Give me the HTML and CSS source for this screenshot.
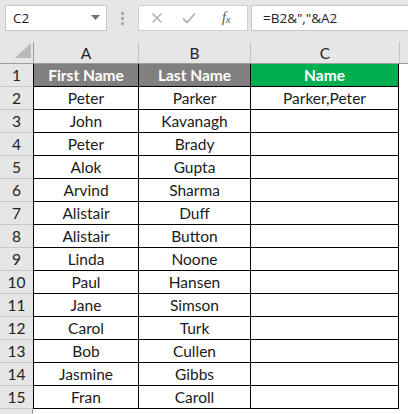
FILE: index.html
```html
<!DOCTYPE html>
<html>
<head>
<meta charset="utf-8">
<link rel="stylesheet" href="styles.css">
</head>
<body>
<div class="app">
  <div class="toolbar">
    <div class="namebox">
      <span class="nb-text">C2</span>
      <svg class="nb-arrow" width="9" height="5" viewBox="0 0 9 5"><polygon points="0,0 9,0 4.5,5" fill="#6f6f6f"/></svg>
    </div>
    <div class="dots"><i></i><i></i><i></i></div>
    <div class="fbtns">
      <svg width="12" height="12" viewBox="0 0 12 12" class="x-ic"><path d="M1.5 1.5 L10.5 10.5 M10.5 1.5 L1.5 10.5" stroke="#a9a9a9" stroke-width="1.3"/></svg>
      <svg width="14" height="12" viewBox="0 0 14 12" class="ok-ic"><path d="M1 6.5 L5 10.5 L13 1.5" stroke="#a9a9a9" stroke-width="1.6" fill="none"/></svg>
      <span class="fx">f<sub>x</sub></span>
    </div>
    <div class="finput">=B2&amp;","&amp;A2</div>
  </div>
  <div class="sheet">
    <div class="hrow">
      <div class="corner"><svg width="17" height="16" viewBox="0 0 17 16" class="tri"><polygon points="16,0 16,15 0,15" fill="#b8b8b8"/></svg></div>
      <div class="ch cha">A</div>
      <div class="ch">B</div>
      <div class="ch">C</div>
      <div class="ch chr"></div>
    </div>
    <div class="row"><div class="rn">1</div><div class="cell hd">First Name</div><div class="cell hd">Last Name</div><div class="cell c hdg">Name</div><div class="rest"></div></div>
    <div class="row"><div class="rn">2</div><div class="cell">Peter</div><div class="cell">Parker</div><div class="cell c">Parker,Peter</div><div class="rest"></div></div>
    <div class="row"><div class="rn">3</div><div class="cell">John</div><div class="cell">Kavanagh</div><div class="cell c"></div><div class="rest"></div></div>
    <div class="row"><div class="rn">4</div><div class="cell">Peter</div><div class="cell">Brady</div><div class="cell c"></div><div class="rest"></div></div>
    <div class="row"><div class="rn">5</div><div class="cell">Alok</div><div class="cell">Gupta</div><div class="cell c"></div><div class="rest"></div></div>
    <div class="row"><div class="rn">6</div><div class="cell">Arvind</div><div class="cell">Sharma</div><div class="cell c"></div><div class="rest"></div></div>
    <div class="row"><div class="rn">7</div><div class="cell">Alistair</div><div class="cell">Duff</div><div class="cell c"></div><div class="rest"></div></div>
    <div class="row"><div class="rn">8</div><div class="cell">Alistair</div><div class="cell">Button</div><div class="cell c"></div><div class="rest"></div></div>
    <div class="row"><div class="rn">9</div><div class="cell">Linda</div><div class="cell">Noone</div><div class="cell c"></div><div class="rest"></div></div>
    <div class="row"><div class="rn">10</div><div class="cell">Paul</div><div class="cell">Hansen</div><div class="cell c"></div><div class="rest"></div></div>
    <div class="row"><div class="rn">11</div><div class="cell">Jane</div><div class="cell">Simson</div><div class="cell c"></div><div class="rest"></div></div>
    <div class="row"><div class="rn">12</div><div class="cell">Carol</div><div class="cell">Turk</div><div class="cell c"></div><div class="rest"></div></div>
    <div class="row"><div class="rn">13</div><div class="cell">Bob</div><div class="cell">Cullen</div><div class="cell c"></div><div class="rest"></div></div>
    <div class="row"><div class="rn">14</div><div class="cell">Jasmine</div><div class="cell">Gibbs</div><div class="cell c"></div><div class="rest"></div></div>
    <div class="row"><div class="rn">15</div><div class="cell">Fran</div><div class="cell">Caroll</div><div class="cell c"></div><div class="rest"></div></div>
    <div class="row"><div class="rn rn-empty"></div><div class="blank"></div></div>
  </div>
</div>
</body>
</html>
```
FILE: styles.css
```css
html, body {
  margin: 0;
  padding: 0;
  background: #ffffff;
  overflow: hidden;
}
.app {
  width: 408px;
  height: 414px;
  overflow: hidden;
  font-family: Lato, "Open Sans", sans-serif;
  color: #1a1a1a;
}
.toolbar {
  height: 42px;
  background: #e6e6e6;
  display: flex;
  align-items: flex-start;
  padding-top: 5px;
  box-sizing: border-box;
}
.namebox {
  margin-left: 5px;
  width: 102px;
  height: 26px;
  box-sizing: border-box;
  background: #fff;
  border: 1px solid #c6c6c6;
  display: flex;
  align-items: center;
  justify-content: space-between;
  padding: 0 6px 0 7px;
  font-family: "Open Sans", "Noto Sans", sans-serif;
  font-size: 13.5px;
  color: #222;
}
.nb-arrow {
  margin-top: -2px;
}
.dots {
  width: 31px;
  height: 26px;
  display: flex;
  flex-direction: column;
  align-items: center;
  justify-content: center;
  gap: 2px;
}
.dots i {
  display: block;
  width: 3px;
  height: 3px;
  background: #ababab;
}
.fbtns {
  width: 110px;
  height: 26px;
  box-sizing: border-box;
  background: #fff;
  border: 1px solid #d0d0d0;
  display: flex;
  align-items: center;
  padding-left: 12px;
}
.ok-ic {
  margin-left: 19px;
}
.fx {
  margin-left: 26px;
  font-family: "Liberation Serif", serif;
  font-style: italic;
  font-size: 14px;
  color: #555;
  line-height: 1;
}
.fx sub {
  font-size: 10px;
  vertical-align: -1px;
}
.finput {
  margin-left: 3px;
  flex: 1;
  height: 26px;
  box-sizing: border-box;
  background: #fff;
  border: 1px solid #c6c6c6;
  border-right: none;
  display: flex;
  align-items: center;
  padding-left: 11px;
  font-family: "Open Sans", "Noto Sans", sans-serif;
  font-size: 13.5px;
  color: #222;
}
.hrow, .row {
  display: grid;
  grid-template-columns: 33px 105px 112px 149px 1fr;
}
.hrow {
  height: 22px;
  background: #e6e6e6;
  border-bottom: 1px solid #9c9c9c;
  box-sizing: border-box;
}
.corner {
  position: relative;
}
.tri {
  position: absolute;
  left: 15px;
  top: 1px;
}
.ch {
  border-left: 1px solid #c2c2c2;
  display: flex;
  align-items: center;
  justify-content: center;
  font-size: 15.5px;
  color: #222;
}
.cha {
  border-left-color: #9c9c9c;
}
.row {
  height: 23px;
}
.rn {
  background: #e6e6e6;
  border-bottom: 1px solid #c8c8c8;
  display: flex;
  align-items: center;
  justify-content: center;
  font-size: 15.5px;
  color: #222;
}
.rn-empty {
  border-bottom: none;
  border-right: 1px solid #9c9c9c;
}
.cell {
  border-left: 1px solid #000;
  border-bottom: 1px solid #000;
  display: flex;
  align-items: center;
  justify-content: center;
  font-size: 15.5px;
  color: #1a1a1a;
  white-space: nowrap;
}
.cell.c {
  border-right: 1px solid #000;
}
.hd {
  background: #808080;
  color: #fff;
  font-weight: bold;
}
.hdg {
  background: #00b050;
  color: #fff;
  font-weight: bold;
}
.blank {
  grid-column: 2 / 6;
  background: #fff;
}
```
